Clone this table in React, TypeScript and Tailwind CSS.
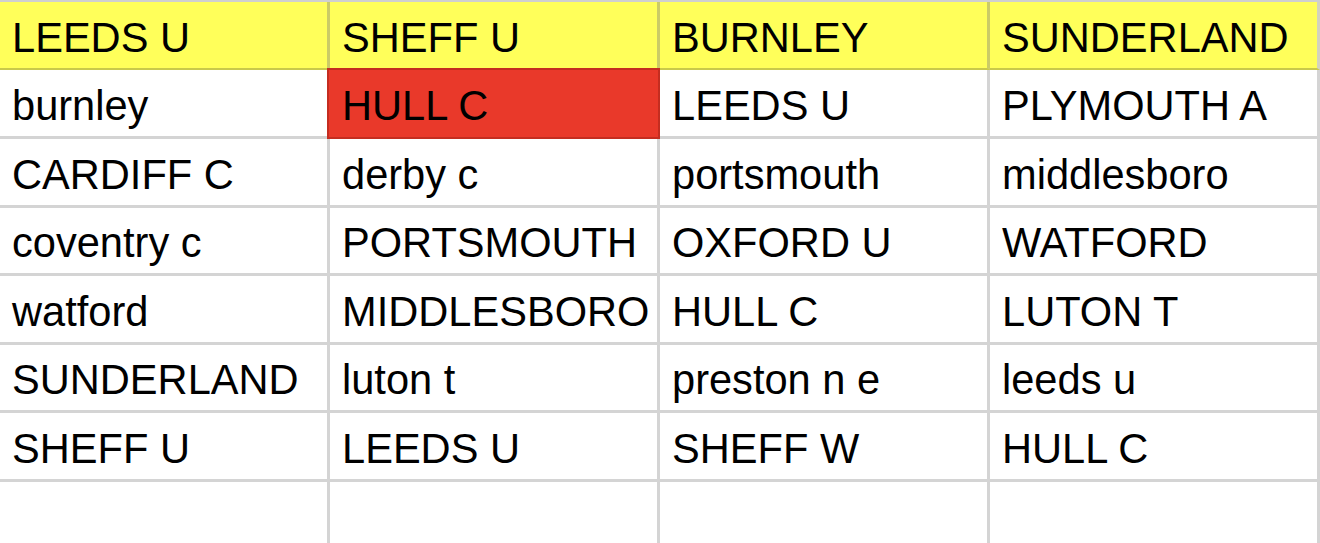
const header = ["LEEDS U", "SHEFF U", "BURNLEY", "SUNDERLAND"]

const rows: string[][] = [
  ["burnley", "HULL C", "LEEDS U", "PLYMOUTH A"],
  ["CARDIFF C", "derby c", "portsmouth", "middlesboro"],
  ["coventry c", "PORTSMOUTH", "OXFORD U", "WATFORD"],
  ["watford", "MIDDLESBORO", "HULL C", "LUTON T"],
  ["SUNDERLAND", "luton t", "preston n e", "leeds u"],
  ["SHEFF U", "LEEDS U", "SHEFF W", "HULL C"],
  ["", "", "", ""],
]

export default function App() {
  return (
    <div
      className="w-[1320px] h-[543px] overflow-hidden bg-white text-black"
      style={{ fontFamily: '"Liberation Sans", Arial, sans-serif' }}
    >
      <div className="grid grid-cols-[330px_330px_330px_330px] border-t-2 border-[#cfcfcf]">
        {header.map((h, i) => (
          <div
            key={h}
            className={`h-[68px] flex items-center pl-3 pt-[5px] bg-[#ffff5a] border-b-2 border-[#c9c94a] text-[41.6px] leading-none whitespace-nowrap ${
              i === 3 ? "border-r-3 border-r-[#d2d2c0]" : "border-r-3 border-r-[#cbcb66]"
            }`}
          >
            {h}
          </div>
        ))}

        {rows.map((row, r) =>
          row.map((cell, c) => {
            const isRed = r === 0 && c === 1
            return (
              <div
                key={`${r}-${c}`}
                className={`flex items-center pl-3 text-[41.6px] leading-none whitespace-nowrap overflow-visible ${
                  isRed
                    ? "bg-[#e9392a] border-2 border-[#c42d20] -ml-[3px] -mt-[2px] pl-[13px] pt-[5px] h-[71px]"
                    : "h-[68.5px] pt-[6px] border-r-3 border-b-3 border-[#d4d4d4]"
                }`}
              >
                {cell}
              </div>
            )
          })
        )}
      </div>
    </div>
  )
}
